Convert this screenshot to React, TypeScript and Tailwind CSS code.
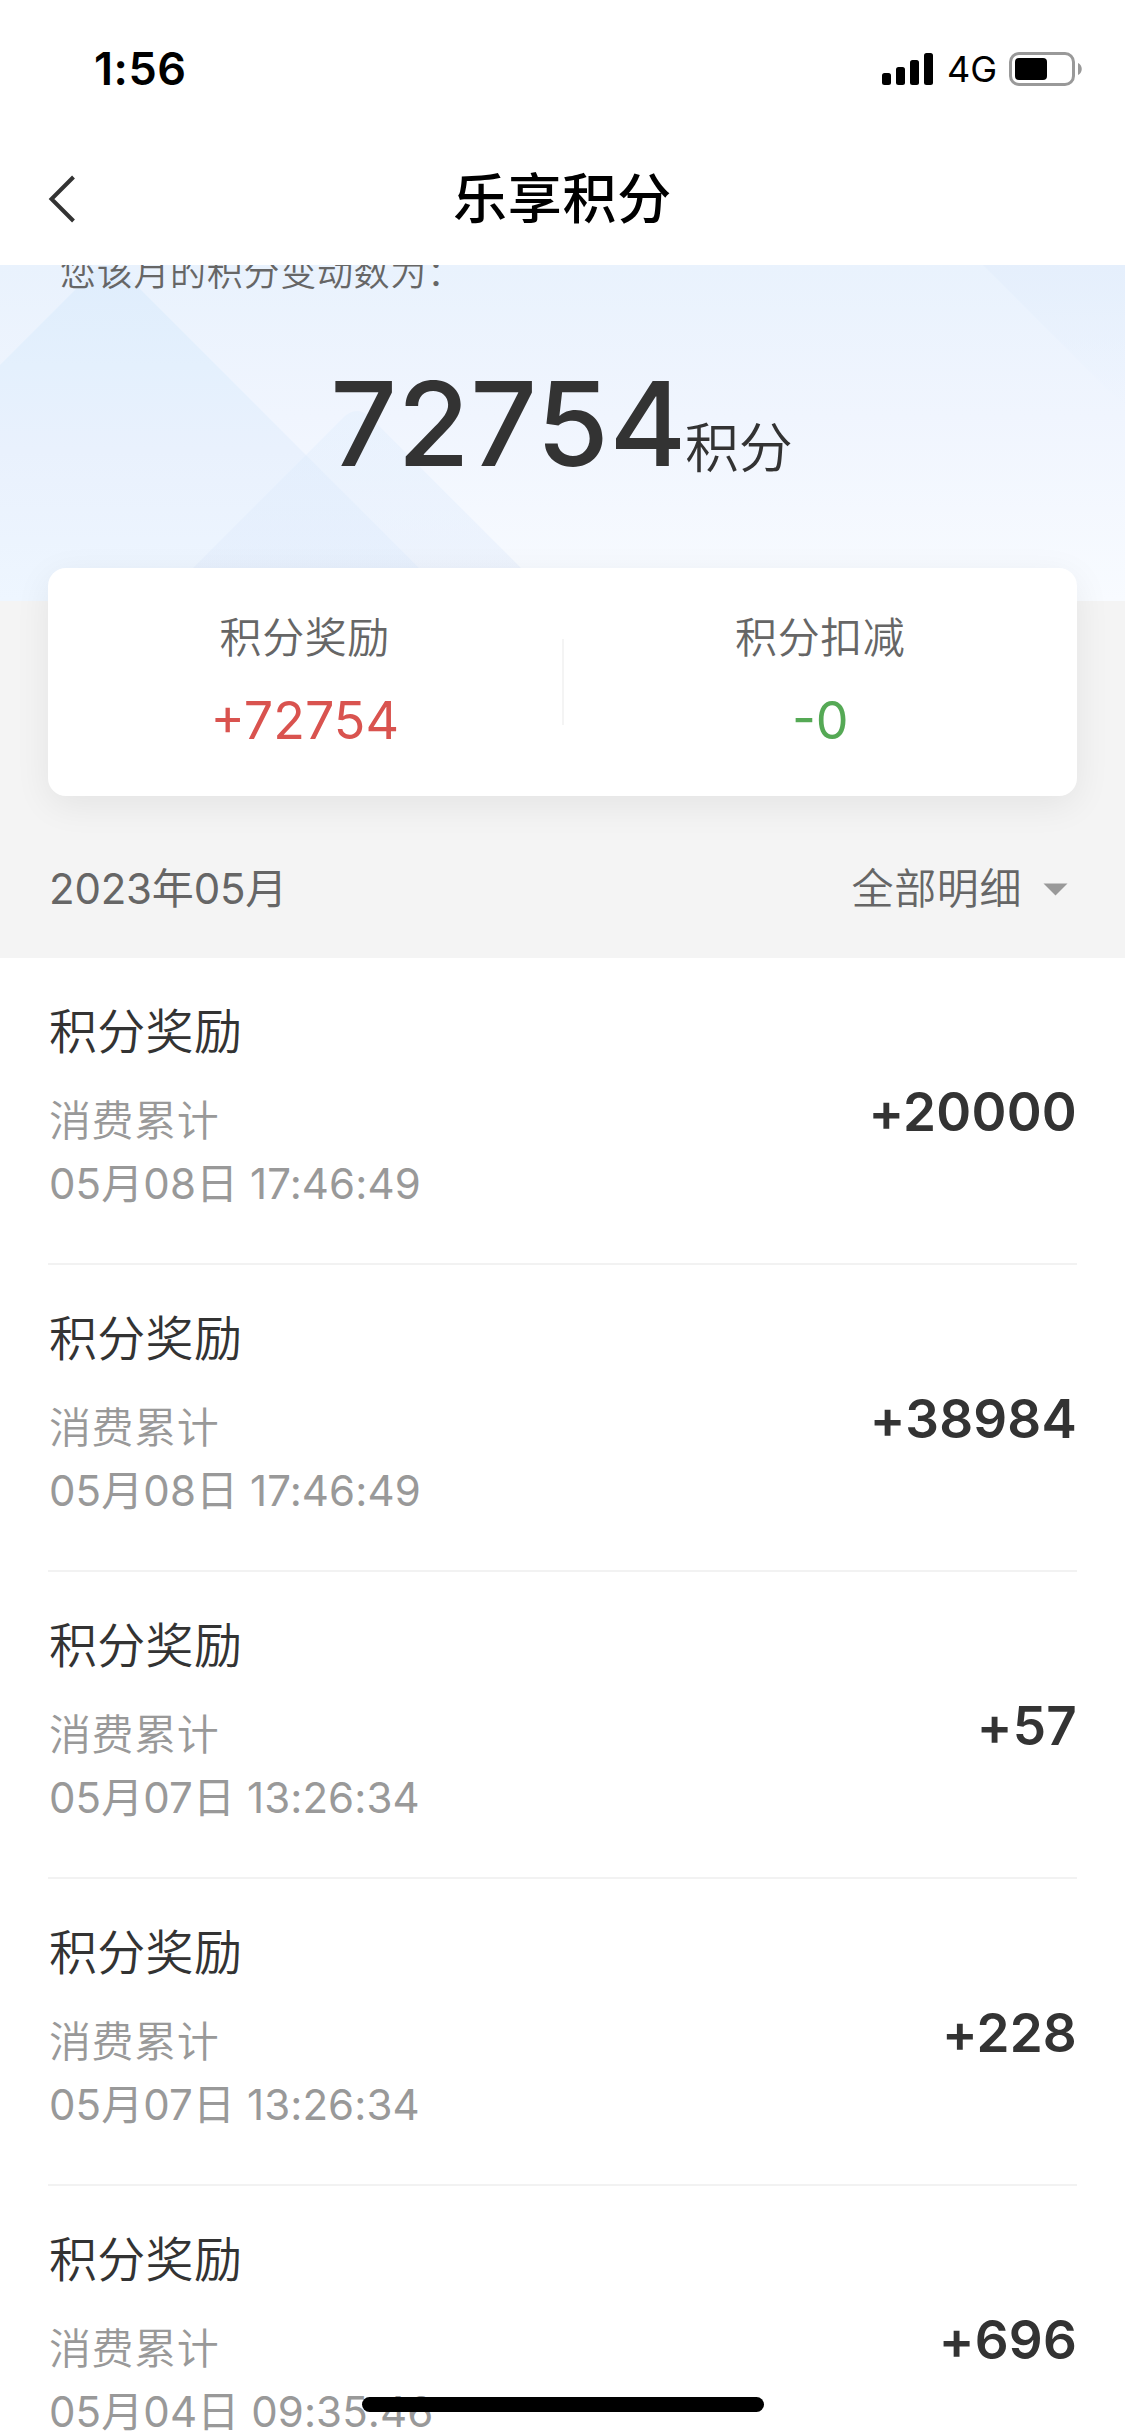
import React from 'react';

interface PointRecord {
  id: number;
  title: string;
  source: string;
  time: string;
  amount: string;
}

const records: PointRecord[] = [
  { id: 1, title: '积分奖励', source: '消费累计', time: '05月08日 17:46:49', amount: '+20000' },
  { id: 2, title: '积分奖励', source: '消费累计', time: '05月08日 17:46:49', amount: '+38984' },
  { id: 3, title: '积分奖励', source: '消费累计', time: '05月07日 13:26:34', amount: '+57' },
  { id: 4, title: '积分奖励', source: '消费累计', time: '05月07日 13:26:34', amount: '+228' },
  { id: 5, title: '积分奖励', source: '消费累计', time: '05月04日 09:35:46', amount: '+696' },
];

function StatusBar() {
  return (
    <div className="flex h-[132px] items-start justify-between pl-[94px] pr-[42px] pt-[42px]">
      <span className="text-[45px] font-semibold leading-[54px] tracking-[0.5px] text-black">1:56</span>
      <div className="flex items-center pt-[10px]">
        <svg width="51" height="34" viewBox="0 0 51 34" fill="#000">
          <rect x="0" y="21" width="9" height="12" rx="2.5" />
          <rect x="14" y="15" width="9" height="18" rx="2.5" />
          <rect x="28" y="8" width="9" height="25" rx="2.5" />
          <rect x="42" y="1" width="9" height="32" rx="2.5" />
        </svg>
        <span className="ml-[14px] w-[62px] text-[36px] leading-[34px] text-black">4G</span>
        <svg width="74" height="34" viewBox="0 0 74 34">
          <rect x="1.5" y="1.5" width="63" height="31" rx="8.5" fill="none" stroke="#999" strokeWidth="3" />
          <rect x="6" y="6" width="32" height="22" rx="4" fill="#000" />
          <path d="M69 11c5 2 5 10 0 12z" fill="#999" />
        </svg>
      </div>
    </div>
  );
}

function NavBar() {
  return (
    <div className="grid h-[133px] grid-cols-[1fr_auto_1fr] items-center px-12">
      <svg width="28" height="50" viewBox="0 0 28 50" fill="none" stroke="#333" strokeWidth="4">
        <path d="M25.5 3 3.5 25l22 22" />
      </svg>
      <h1 className="pt-0.5 text-[54px] font-medium leading-[131px] tracking-[0.7px] text-black">乐享积分</h1>
    </div>
  );
}

function HeroBackground() {
  return (
    <svg className="absolute inset-0" width="1125" height="336" viewBox="0 0 1125 336">
      <defs>
        <linearGradient id="base" x1="0" y1="0" x2="0" y2="1">
          <stop offset="0" stopColor="#e9f2fd" />
          <stop offset="0.45" stopColor="#f0f5fe" />
          <stop offset="1" stopColor="#f8fbff" />
        </linearGradient>
        <linearGradient id="peak" x1="0" y1="0" x2="0" y2="1">
          <stop offset="0" stopColor="#dfedfc" />
          <stop offset="0.3" stopColor="#e4f0fd" />
          <stop offset="0.55" stopColor="#e9f1fd" />
          <stop offset="1" stopColor="#eef6ff" />
        </linearGradient>
        <linearGradient id="hill" x1="0" y1="0" x2="0" y2="1">
          <stop offset="0" stopColor="#d9ebfd" stopOpacity="0.3" />
          <stop offset="1" stopColor="#dfe8fa" stopOpacity="0.4" />
        </linearGradient>
        <linearGradient id="corner" x1="0" y1="0" x2="0" y2="1">
          <stop offset="0" stopColor="#e5effc" />
          <stop offset="1" stopColor="#e8f1fd" stopOpacity="0" />
        </linearGradient>
      </defs>
      <rect width="1125" height="336" fill="url(#base)" />
      <path d="M0 100 92 8q16-14 32 0l328 328H0z" fill="url(#peak)" />
      <path d="M160 336 345 151q12-10 24 0l185 185z" fill="url(#hill)" />
      <path d="M983 0 1125 142V0z" fill="url(#corner)" />
    </svg>
  );
}

function Hero() {
  return (
    <section className="relative h-[336px] overflow-hidden">
      <HeroBackground />
      <div className="relative -mt-3">
        <p className="pl-[60px] text-[36px] font-[350] leading-10 tracking-[0.7px] text-[#666]">您该月的积分变动数为：</p>
        <div className="mt-[61px] flex items-baseline justify-center pr-0.5 text-[#333]">
          <span className="text-[117px] font-medium leading-[140px] tracking-[0.6px]">72754</span>
          <span className="relative top-0.5 -ml-0.5 text-[54px] font-[350]">积分</span>
        </div>
      </div>
    </section>
  );
}

function SummaryCard() {
  return (
    <div className="relative mx-12 -mt-[33px] flex h-[228px] items-center rounded-[18px] bg-white shadow-[0_9px_36px_rgba(0,0,0,0.07)]">
      <div className="flex-1 text-center">
        <p className="text-[42px] font-[350] leading-[60px] tracking-[0.6px] text-[#666]">积分奖励</p>
        <p className="mt-[17px] text-[52px] leading-[72px] text-[#d9534f]">+72754</p>
      </div>
      <div className="h-[86px] w-[2px] bg-[#f4f4f4]" />
      <div className="flex-1 text-center">
        <p className="text-[42px] font-[350] leading-[60px] tracking-[0.6px] text-[#666]">积分扣减</p>
        <p className="mt-[17px] text-[52px] leading-[72px] text-[#55a955]">-0</p>
      </div>
    </div>
  );
}

function FilterRow() {
  return (
    <div className="mt-[63px] flex items-center justify-between pl-[49px] pr-[57px] text-[42px] leading-[60px] text-[#666]">
      <span className="tracking-[-0.2px]">2023年05月</span>
      <div className="flex items-center gap-[21px]">
        <span className="font-[350] tracking-[0.6px]">全部明细</span>
        <svg width="25" height="13" viewBox="0 0 25 13" fill="#999">
          <path d="M0.5 0.5h24L12.5 12.5z" />
        </svg>
      </div>
    </div>
  );
}

function RecordRow({ record }: { record: PointRecord }) {
  return (
    <li className="flex h-[307px] shrink-0 items-center justify-between border-b-2 border-[#f2f2f2]">
      <div className="pb-[11px] pl-px">
        <p className="text-[48px] font-[350] leading-[72px] tracking-[0.3px] text-[#333]">{record.title}</p>
        <p className="mt-[21px] text-[42px] font-[350] leading-[63px] tracking-[0.6px] text-[#999]">{record.source}</p>
        <p className="text-[42px] leading-[63px] tracking-[0.1px] text-[#999]">{record.time}</p>
      </div>
      <span className="pt-0.5 text-[53px] font-semibold leading-[72px] tracking-[0.2px] text-[#333]">{record.amount}</span>
    </li>
  );
}

export default function App() {
  return (
    <div
      lang="zh-CN"
      className="relative flex h-[2436px] w-[1125px] flex-col overflow-hidden bg-white font-['Inter','Noto_Sans_CJK_SC',sans-serif]"
    >
      <StatusBar />
      <NavBar />
      <Hero />
      <section className="h-[357px] shrink-0 bg-[#f4f4f4]">
        <SummaryCard />
        <FilterRow />
      </section>
      <ul className="flex min-h-0 flex-1 flex-col overflow-hidden px-12">
        {records.map((record) => (
          <RecordRow key={record.id} record={record} />
        ))}
      </ul>
      {/* home indicator */}
      <div className="absolute bottom-6 left-1/2 h-[15px] w-[402px] -translate-x-1/2 rounded-full bg-black" />
    </div>
  );
}
